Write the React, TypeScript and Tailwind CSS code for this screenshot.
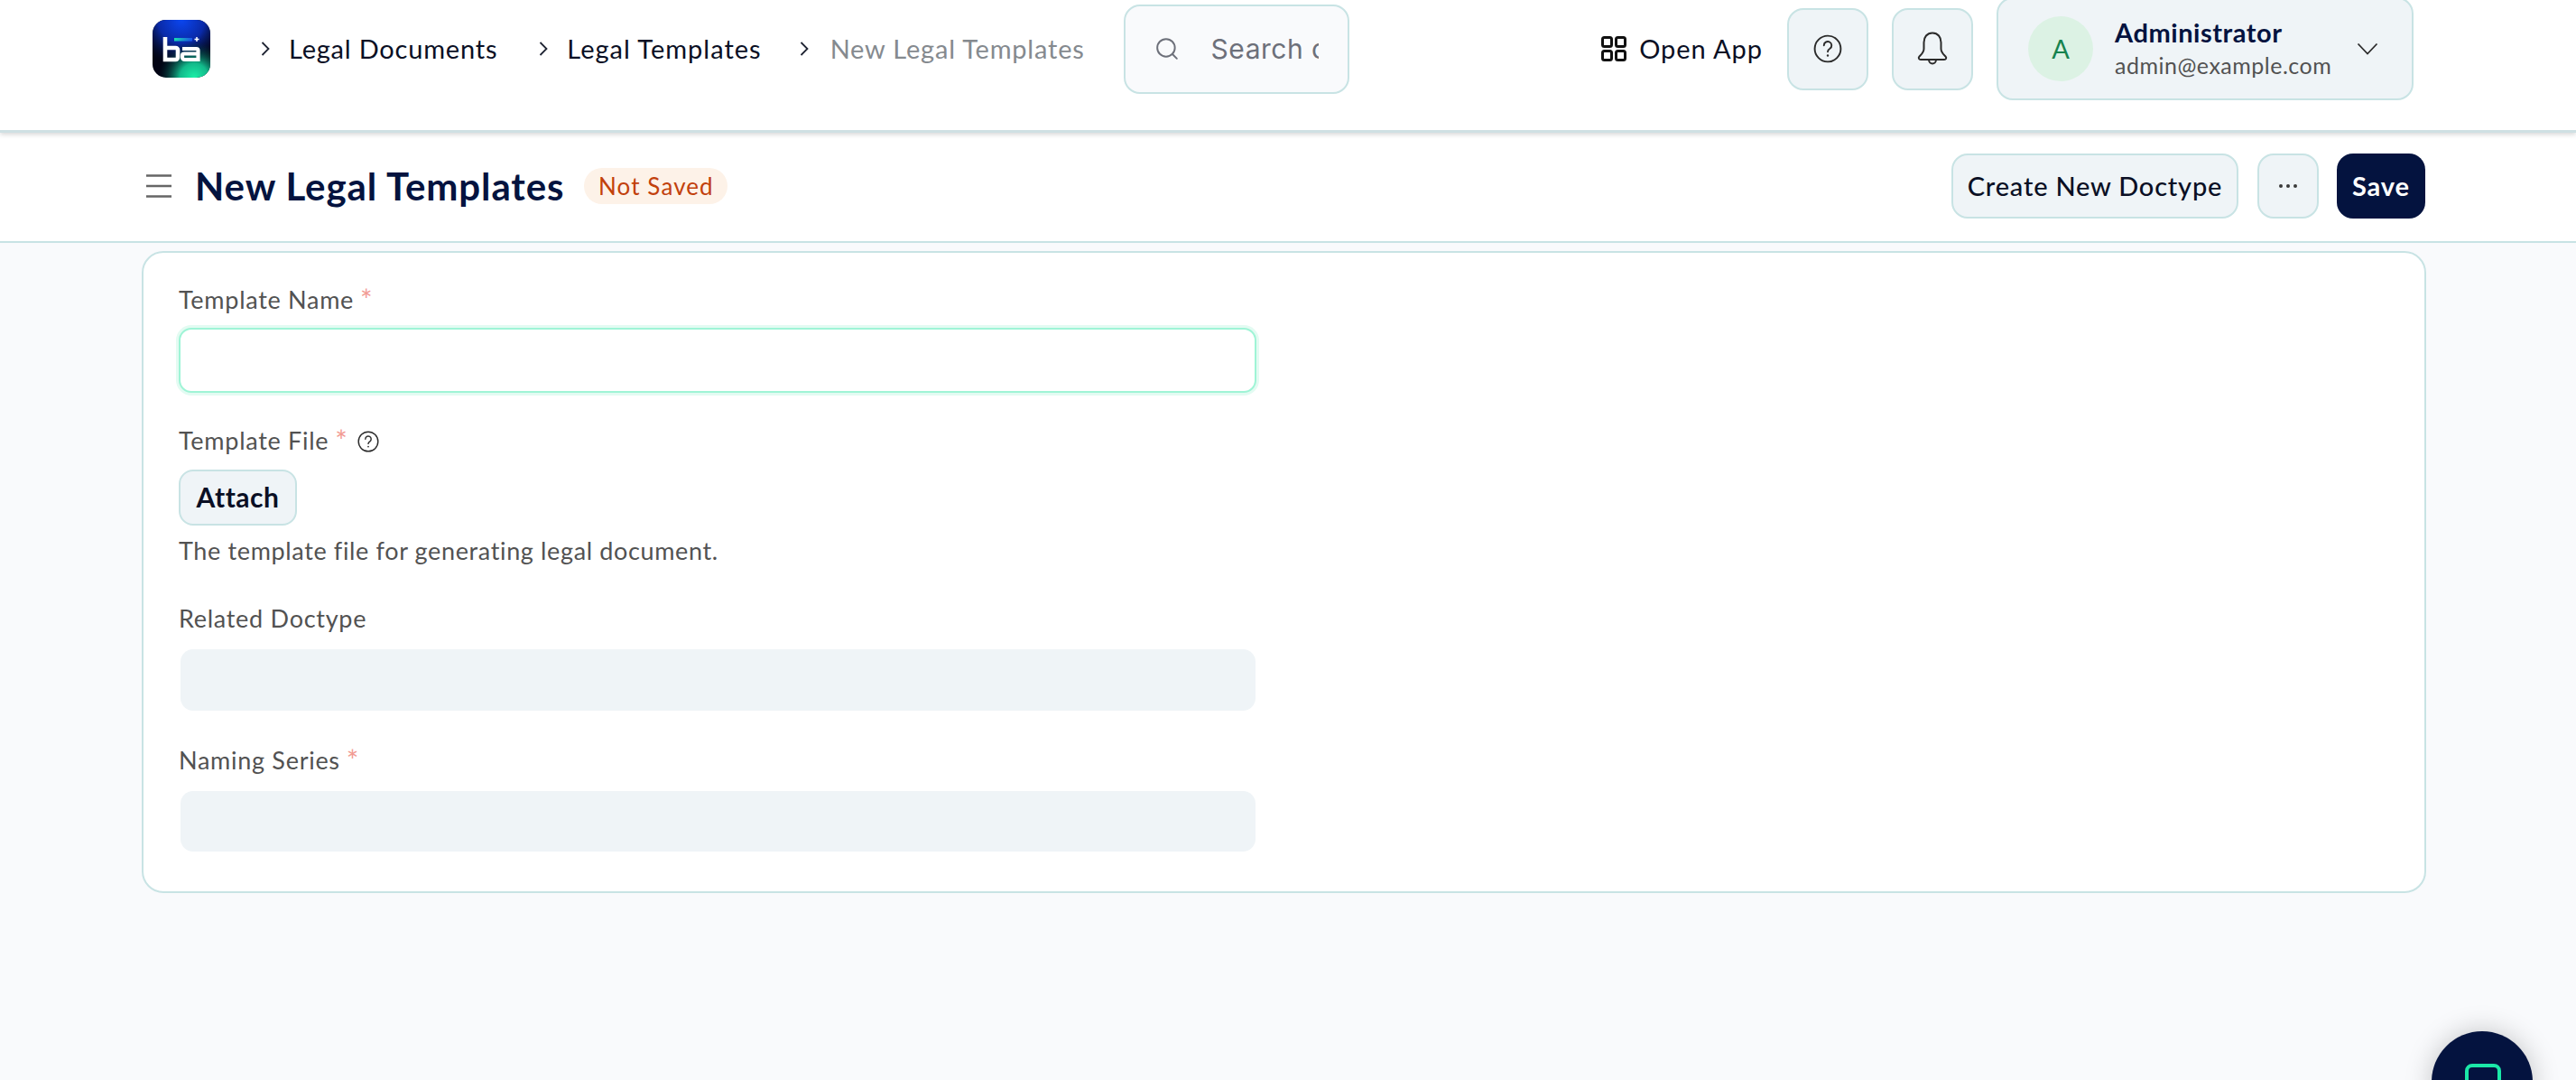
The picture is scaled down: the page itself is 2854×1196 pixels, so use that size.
import React from "react";

const Logo = () => (
  <svg width="64" height="64" viewBox="0 0 64 64" className="shrink-0">
    <defs>
      <radialGradient id="lgBlue" cx="0.5" cy="0" r="0.8">
        <stop offset="0" stopColor="#0b46f0" />
        <stop offset="0.5" stopColor="#0a2aa8" />
        <stop offset="1" stopColor="#04103c" stopOpacity="0" />
      </radialGradient>
      <radialGradient id="lgGreen" cx="0.72" cy="1" r="0.62">
        <stop offset="0" stopColor="#1bf0a8" />
        <stop offset="0.4" stopColor="#12b98a" />
        <stop offset="1" stopColor="#04343a" stopOpacity="0" />
      </radialGradient>
      <linearGradient id="lgBar" x1="0" x2="1" y1="0" y2="0">
        <stop offset="0" stopColor="#18e0b0" />
        <stop offset="1" stopColor="#1a50e8" />
      </linearGradient>
      <clipPath id="lgClip">
        <rect width="64" height="64" rx="15" />
      </clipPath>
    </defs>
    <g clipPath="url(#lgClip)">
      <rect width="64" height="64" fill="#020414" />
      <rect width="64" height="64" fill="url(#lgBlue)" />
      <rect width="64" height="64" fill="url(#lgGreen)" />
    </g>
    <path d="M14 19v25h11.500a2.500 2.500 0 0 0 2.500-2.500v-8a2.500 2.500 0 0 0-2.500-2.500H14" fill="none" stroke="#fff" strokeWidth="4.600" />
    <path d="M33 32h15.500a2 2 0 0 1 2 2v10H35.500a2.500 2.500 0 0 1-2.500-2.500v-2a2 2 0 0 1 2-2h15" fill="none" stroke="#fff" strokeWidth="4.200" />
    <rect x="24" y="20" width="20" height="3.500" fill="url(#lgBar)" />
    <path d="M49 19v5M46.500 21.500h5" stroke="#fff" strokeWidth="1.500" />
  </svg>
);

const Chevron = () => (
  <svg width="10" height="16" viewBox="0 0 10 16" fill="none" stroke="#1f2433" strokeWidth="1.800" className="shrink-0">
    <path d="M1.500 1l7 7-7 7" />
  </svg>
);

const Help = ({ size }: { size: number }) => (
  <svg width={size} height={size} viewBox="0 0 30 30" fill="none" stroke="#2b2b2b" strokeWidth="1.800" className="shrink-0">
    <circle cx="15" cy="15" r="13.500" />
    <path d="M11 11.500a4 4 0 1 1 6.300 3.300c-1.500 1-2.300 1.800-2.300 3.200" strokeLinecap="round" />
    <circle cx="15" cy="22" r="1.100" fill="#2b2b2b" stroke="none" />
  </svg>
);

const Star = () => <span className="ml-[7px] align-[-2px] text-[32px] leading-[0] text-[#f29b93]">*</span>;

const Label = ({ children }: { children: React.ReactNode }) => (
  <div className="text-[27px] leading-[34px] tracking-[0.72px] text-[#525252]">{children}</div>
);

export default function App() {
  return (
    <div className="relative h-[1196px] w-[2854px] overflow-hidden bg-[#f9fafc] font-['Lato','Liberation_Sans',sans-serif] text-[#04133f]">
      <header className="relative z-10 flex h-[147px] items-start border-b-[3px] border-[#cfe0e3] bg-white pl-[169px] pr-[180px] shadow-[0_2px_5px_rgba(0,0,0,0.16)]">
        <div className="flex h-[108px] w-full items-center">
          <Logo />
          <div className="ml-[56px] flex items-center text-[29px] tracking-[0.8px] text-[#0a0f24]">
            <Chevron />
            <span className="ml-[21px]">Legal Documents</span>
            <span className="ml-[46px]"><Chevron /></span>
            <span className="ml-[21px] tracking-[1px]">Legal Templates</span>
            <span className="ml-[42px]"><Chevron /></span>
            <span className="ml-[24px] text-[#858a8f]">New Legal Templates</span>
          </div>
          <div className="ml-[43px] flex h-[99px] w-[250px] items-center rounded-[18px] border-2 border-[#c8e3e4] bg-[#f9fafc] pl-[33px]">
            <svg width="26" height="26" viewBox="0 0 24 24" fill="none" stroke="#6d707a" strokeWidth="1.800" strokeLinecap="round" className="shrink-0">
              <circle cx="11" cy="11" r="9" />
              <path d="M18 18l4 4" />
            </svg>
            <span className="ml-[36px] w-[119px] overflow-hidden whitespace-nowrap font-['Inter',sans-serif] text-[30px] tracking-[0.5px] text-[#6d707a]">Search or type</span>
          </div>
          <div className="ml-auto flex items-center">
            <svg width="28" height="28" viewBox="0 0 28 28" fill="none" stroke="#111" strokeWidth="3" className="shrink-0">
              <rect x="1.500" y="1.500" width="10" height="10" rx="2" />
              <rect x="16.500" y="1.500" width="10" height="10" rx="2" />
              <rect x="1.500" y="16.500" width="10" height="10" rx="2" />
              <rect x="16.500" y="16.500" width="10" height="10" rx="2" />
            </svg>
            <span className="ml-[14px] text-[29px] tracking-[0.95px] text-[#0a0f24]">Open App</span>
            <div className="ml-[27px] flex h-[91px] w-[90px] items-center justify-center rounded-[18px] border-2 border-[#c8e3e4] bg-[#eff4f7]">
              <Help size={32} />
            </div>
            <div className="ml-[26px] flex h-[91px] w-[90px] items-center justify-center rounded-[18px] border-2 border-[#c8e3e4] bg-[#eff4f7]">
              <svg width="34" height="38" viewBox="0 0 34 38" fill="none" stroke="#2b2b2b" strokeWidth="2" strokeLinejoin="round">
                <path d="M17 1.500c-6 0-9.500 4.500-9.500 10.500v7c0 4-2.500 6-5 8.500-1.500 1.500-.5 3.500 1.500 3.500h26c2 0 3-2 1.500-3.500-2.500-2.500-5-4.500-5-8.500v-7c0-6-3.500-10.500-9.500-10.500z" />
                <path d="M13 31c0 6 8 6 8 0" />
              </svg>
            </div>
            <div className="ml-[26px] flex h-[114px] w-[462px] items-center rounded-[18px] border-2 border-[#c8e3e4] bg-[#eff4f7] pl-[33px]">
              <div className="flex h-[72px] w-[72px] shrink-0 items-center justify-center rounded-full bg-[#dcf2e4] text-[29px] text-[#17834f]">A</div>
              <div className="ml-[24px] flex flex-col">
                <span className="text-[29px] font-bold leading-[36px] tracking-[0.55px] text-[#04133f]">Administrator</span>
                <span className="text-[25px] leading-[36px] tracking-[0.5px] text-[#525252]">admin@example.com</span>
              </div>
              <svg width="24" height="14" viewBox="0 0 24 14" fill="none" stroke="#2b2b2b" strokeWidth="1.800" className="ml-[28px] shrink-0">
                <path d="M1.500 1.500l10.500 11 10.500-11" />
              </svg>
            </div>
          </div>
        </div>
      </header>

      <div className="flex h-[122px] items-start border-b-2 border-[#c8e3e4] bg-white pl-[162px] pr-[167px] pt-[23px]">
        <div className="flex h-[72px] w-full items-center">
          <svg width="28" height="26" viewBox="0 0 28 26" stroke="#666" strokeWidth="2.500" className="shrink-0">
            <path d="M0 1.500h28M0 13h28M0 24.500h28" />
          </svg>
          <h1 className="ml-[26px] text-[42px] font-bold tracking-[0.9px] text-[#04133f]">New Legal Templates</h1>
          <span className="ml-[22px] flex h-[40px] w-[159px] items-center justify-center rounded-full bg-[#fdf2e8] text-[26px] tracking-[1.1px] text-[#c2410c]">Not Saved</span>
          <div className="ml-auto flex h-[72px] items-stretch">
            <div className="flex w-[318px] items-center justify-center rounded-[18px] border-2 border-[#c8e3e4] bg-[#eff4f7] text-[29px] font-medium tracking-[0.8px] text-[#0a0f24]">Create New Doctype</div>
            <div className="ml-[21px] flex w-[68px] items-center justify-center rounded-[18px] border-2 border-[#c8e3e4] bg-[#eff4f7]">
              <svg width="22" height="6" viewBox="0 0 22 6" fill="#3a3a3a"><circle cx="3" cy="3" r="2" /><circle cx="11" cy="3" r="2" /><circle cx="19" cy="3" r="2" /></svg>
            </div>
            <div className="ml-[20px] flex w-[98px] items-center justify-center rounded-[18px] bg-[#04133f] text-[29px] font-bold tracking-[0.9px] text-white">Save</div>
          </div>
        </div>
      </div>

      <main className="ml-[157px] mr-[166px] mt-[9px] h-[711px] rounded-[24px] border-2 border-[#c8e3e4] bg-white pl-[39px] pt-[35px]">
        <Label>Template Name<Star /></Label>
        <div className="mt-[14px] h-[72px] w-[1194px] rounded-[14px] border-2 border-[#9ff4d6] bg-white shadow-[0_0_0_3px_#e3fbf2]" />
        <div className="mt-[36px] flex items-center">
          <Label>Template File<Star /></Label>
          <span className="ml-[10px] mt-[2px]"><Help size={24} /></span>
        </div>
        <div className="mt-[15px] flex h-[62px] w-[131px] items-center justify-center rounded-[16px] border-2 border-[#c8e3e4] bg-[#eff4f7] pb-[2px] text-[30px] font-bold tracking-[0.5px] text-[#0a0f24]">Attach</div>
        <div className="mt-[11px] text-[27px] leading-[34px] tracking-[0.64px] text-[#525252]">The template file for generating legal document.</div>
        <div className="mt-[41px]"><Label>Related Doctype</Label></div>
        <div className="ml-[2px] mt-[17px] h-[68px] w-[1191px] rounded-[14px] bg-[#eff4f7]" />
        <div className="mt-[38px]"><Label>Naming Series<Star /></Label></div>
        <div className="ml-[2px] mt-[17px] h-[67px] w-[1191px] rounded-[14px] bg-[#eff4f7]" />
      </main>

      <div className="absolute left-[2694px] top-[1142px] h-[112px] w-[112px] rounded-full bg-[#04133f] shadow-[0_0_30px_rgba(0,0,0,0.22)]">
        <svg width="40" height="40" viewBox="0 0 40 40" fill="none" stroke="#1be8a8" strokeWidth="4" className="absolute left-[37px] top-[36px]">
          <rect x="2" y="2" width="36" height="36" rx="6" />
        </svg>
      </div>
    </div>
  );
}
